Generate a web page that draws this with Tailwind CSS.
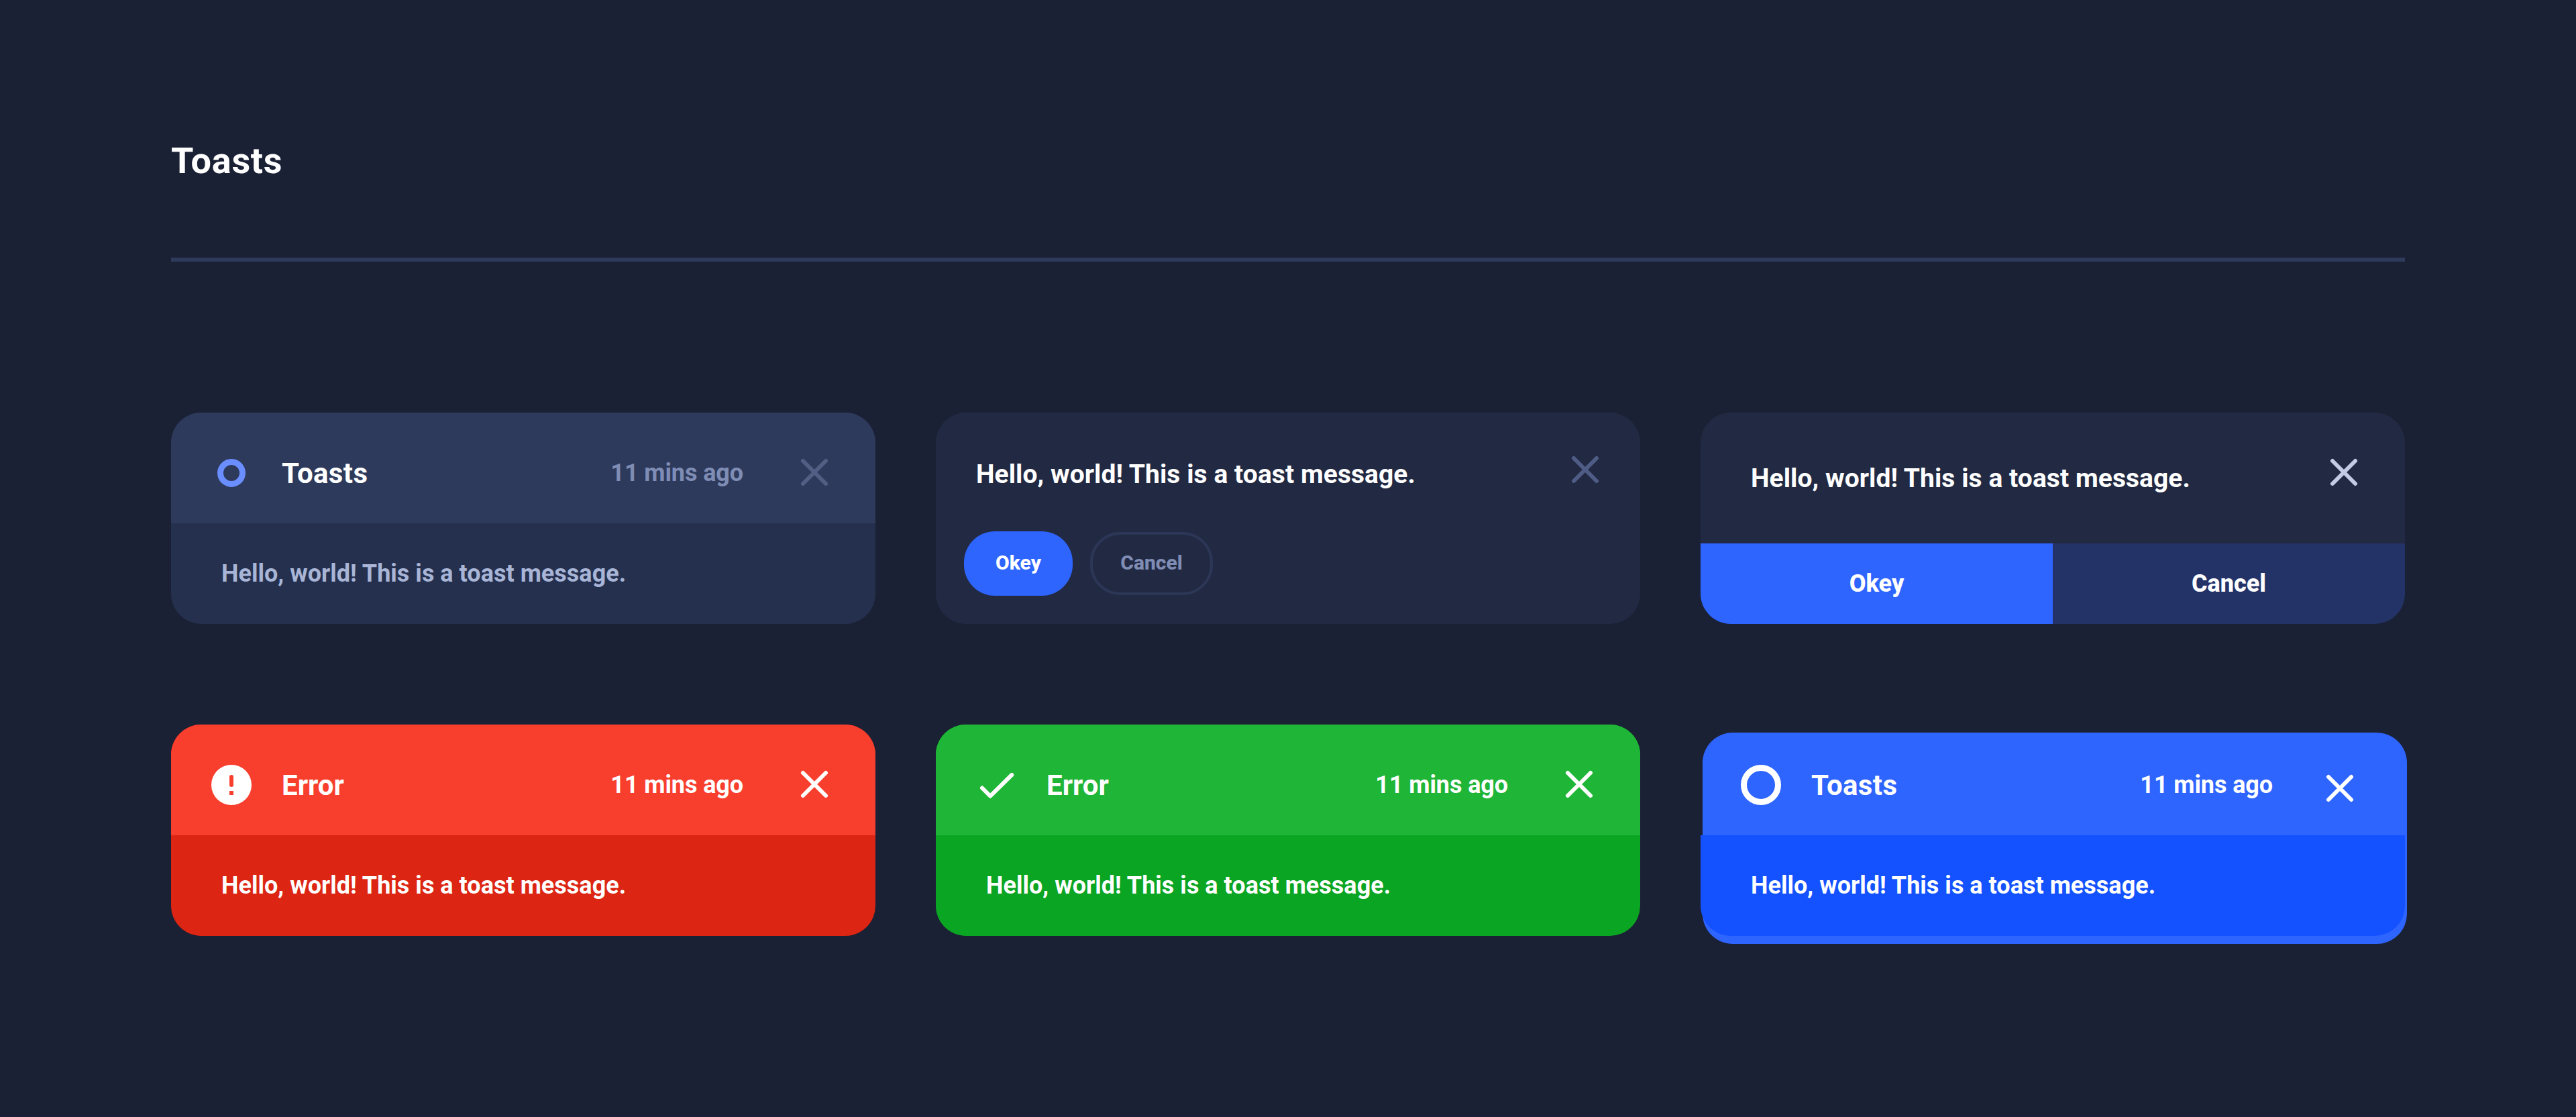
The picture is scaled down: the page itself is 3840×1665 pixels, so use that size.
<!DOCTYPE html>
<html lang="en">
<head>
    <meta charset="UTF-8">
    <meta name="viewport" content="width=device-width, initial-scale=1.0">
    <title>Toasts</title>
    <!-- Tailwind CSS CDN -->
    <script src="https://cdn.jsdelivr.net/npm/@tailwindcss/browser@4"></script>
</head>
<body class="bg-[#1b2134] font-[Roboto,sans-serif] font-bold text-white min-h-screen">
    <main class="px-[255px] pt-[210px]">
        <!-- Section title -->
        <h1 class="text-[54px] leading-[60px] tracking-[0.7px]">Toasts</h1>
        <hr class="mt-[114px] border-0 h-1.5 bg-[#2d3a5b]">

        <!-- Toast grid -->
        <div class="mt-[225px] grid grid-cols-3 gap-x-[90px] gap-y-[150px]">

            <!-- Default toast -->
            <div class="h-[315px] rounded-[45px] overflow-hidden bg-[#24304e]">
                <div class="h-[165px] pt-[15px] pl-15 pr-[61px] flex items-center bg-[#2d3a5b]">
                    <svg class="size-15" viewBox="0 0 60 60" fill="none">
                        <circle cx="30" cy="30" r="16.5" stroke="#6a8eff" stroke-width="9" />
                    </svg>
                    <h2 class="ml-[45px] text-[42px] tracking-[0.4px]">Toasts</h2>
                    <span class="ml-auto mr-[76px] text-[36px] tracking-[-0.1px] text-[#7f8db5]">11 mins ago</span>
                    <button class="-mt-[2px]">
                        <svg class="size-15" viewBox="0 0 60 60" fill="none" stroke="#525f85" stroke-width="6" stroke-linecap="round">
                            <path d="M13 13l34 34M47 13L13 47" />
                        </svg>
                    </button>
                </div>
                <div class="h-[150px] px-[75px] flex items-center">
                    <p class="text-[36px] tracking-[0.02px] text-[#a8b5d6]">Hello, world! This is a toast message.</p>
                </div>
            </div>

            <!-- Toast with pill buttons -->
            <div class="h-[315px] rounded-[45px] bg-[#222942]">
                <div class="pt-[55px] pl-15 pr-[52px] flex justify-between">
                    <p class="mt-[7px] text-[39px] leading-[60px] tracking-[0.06px]">Hello, world! This is a toast message.</p>
                    <button class="h-15">
                        <svg class="size-15" viewBox="0 0 60 60" fill="none" stroke="#4f5c85" stroke-width="6" stroke-linecap="round">
                            <path d="M13 13l34 34M47 13L13 47" />
                        </svg>
                    </button>
                </div>
                <div class="mt-[55px] pl-[42px] flex items-center gap-[26px] text-[30px] font-extrabold">
                    <button class="w-[162px] h-24 pb-[3px] rounded-[46px] bg-[#2e65ff]">Okey</button>
                    <button class="w-[183px] h-[94px] pb-[3px] rounded-[45px] border-[4px] border-[#2c3757] text-[#7f8db5]">Cancel</button>
                </div>
            </div>

            <!-- Toast with full width buttons -->
            <div class="h-[315px] rounded-[45px] overflow-hidden bg-[#222942]">
                <div class="h-[195px] pt-[59px] pl-[75px] pr-[61px] flex justify-between">
                    <p class="mt-[9px] text-[39px] leading-[60px] tracking-[0.06px]">Hello, world! This is a toast message.</p>
                    <button class="h-15">
                        <svg class="size-15" viewBox="0 0 60 60" fill="none" stroke="#c5cbe6" stroke-width="6" stroke-linecap="round">
                            <path d="M13 13l34 34M47 13L13 47" />
                        </svg>
                    </button>
                </div>
                <div class="h-[120px] grid grid-cols-2 text-[36px] font-extrabold">
                    <button class="bg-[#2e65ff]">Okey</button>
                    <button class="bg-[#233368]">Cancel</button>
                </div>
            </div>

            <!-- Error toast -->
            <div class="h-[315px] rounded-[45px] overflow-hidden bg-[#dc2513]">
                <div class="h-[165px] pt-[15px] pl-15 pr-[61px] flex items-center bg-[#f83f2e]">
                    <svg class="size-15" viewBox="0 0 60 60">
                        <circle cx="30" cy="30" r="30" fill="#fff" />
                        <rect x="27" y="15" width="6" height="18" rx="3" fill="#f83f2e" />
                        <rect x="27" y="39" width="6" height="6" fill="#f83f2e" />
                    </svg>
                    <h2 class="ml-[45px] text-[42px]">Error</h2>
                    <span class="ml-auto mr-[76px] text-[36px] tracking-[-0.1px]">11 mins ago</span>
                    <button class="-mt-[2px]">
                        <svg class="size-15" viewBox="0 0 60 60" fill="none" stroke="#fff" stroke-width="6" stroke-linecap="round">
                            <path d="M13 13l34 34M47 13L13 47" />
                        </svg>
                    </button>
                </div>
                <div class="h-[150px] px-[75px] flex items-center">
                    <p class="text-[36px] tracking-[0.02px]">Hello, world! This is a toast message.</p>
                </div>
            </div>

            <!-- Success toast -->
            <div class="h-[315px] rounded-[45px] overflow-hidden bg-[#0aa522]">
                <div class="h-[165px] pt-[15px] pl-15 pr-[61px] flex items-center bg-[#1fb537]">
                    <svg class="size-15" viewBox="0 0 60 60" fill="none" stroke="#fff" stroke-width="6" stroke-linecap="round" stroke-linejoin="round">
                        <path d="M9 34.5l12.2 12.2L53.3 15" />
                    </svg>
                    <h2 class="ml-[45px] text-[42px]">Error</h2>
                    <span class="ml-auto mr-[76px] text-[36px] tracking-[-0.1px]">11 mins ago</span>
                    <button class="-mt-[2px]">
                        <svg class="size-15" viewBox="0 0 60 60" fill="none" stroke="#fff" stroke-width="6" stroke-linecap="round">
                            <path d="M13 13l34 34M47 13L13 47" />
                        </svg>
                    </button>
                </div>
                <div class="h-[150px] px-[75px] flex items-center">
                    <p class="text-[36px] tracking-[0.02px]">Hello, world! This is a toast message.</p>
                </div>
            </div>

            <!-- Primary toast, backing plate is shifted down and to the right -->
            <div class="relative h-[315px]">
                <div class="absolute top-3 left-[3px] w-full h-full rounded-[45px] bg-[#2e65ff]"></div>
                <div class="relative h-[165px] pt-[15px] pl-15 pr-[67px] flex items-center">
                    <svg class="size-15" viewBox="0 0 60 60" fill="none">
                        <circle cx="30" cy="30" r="25.5" stroke="#fff" stroke-width="9" />
                    </svg>
                    <h2 class="ml-[45px] text-[42px] tracking-[0.4px]">Toasts</h2>
                    <span class="ml-auto mr-[70px] text-[36px] tracking-[-0.1px]">11 mins ago</span>
                    <button class="mt-[10px]">
                        <svg class="size-15" viewBox="0 0 60 60" fill="none" stroke="#fff" stroke-width="6" stroke-linecap="round">
                            <path d="M13 13l34 34M47 13L13 47" />
                        </svg>
                    </button>
                </div>
                <div class="relative h-[150px] px-[75px] flex items-center rounded-b-[45px] bg-[#1452ff]">
                    <p class="text-[36px] tracking-[0.02px]">Hello, world! This is a toast message.</p>
                </div>
            </div>
        </div>
    </main>
</body>
</html>
